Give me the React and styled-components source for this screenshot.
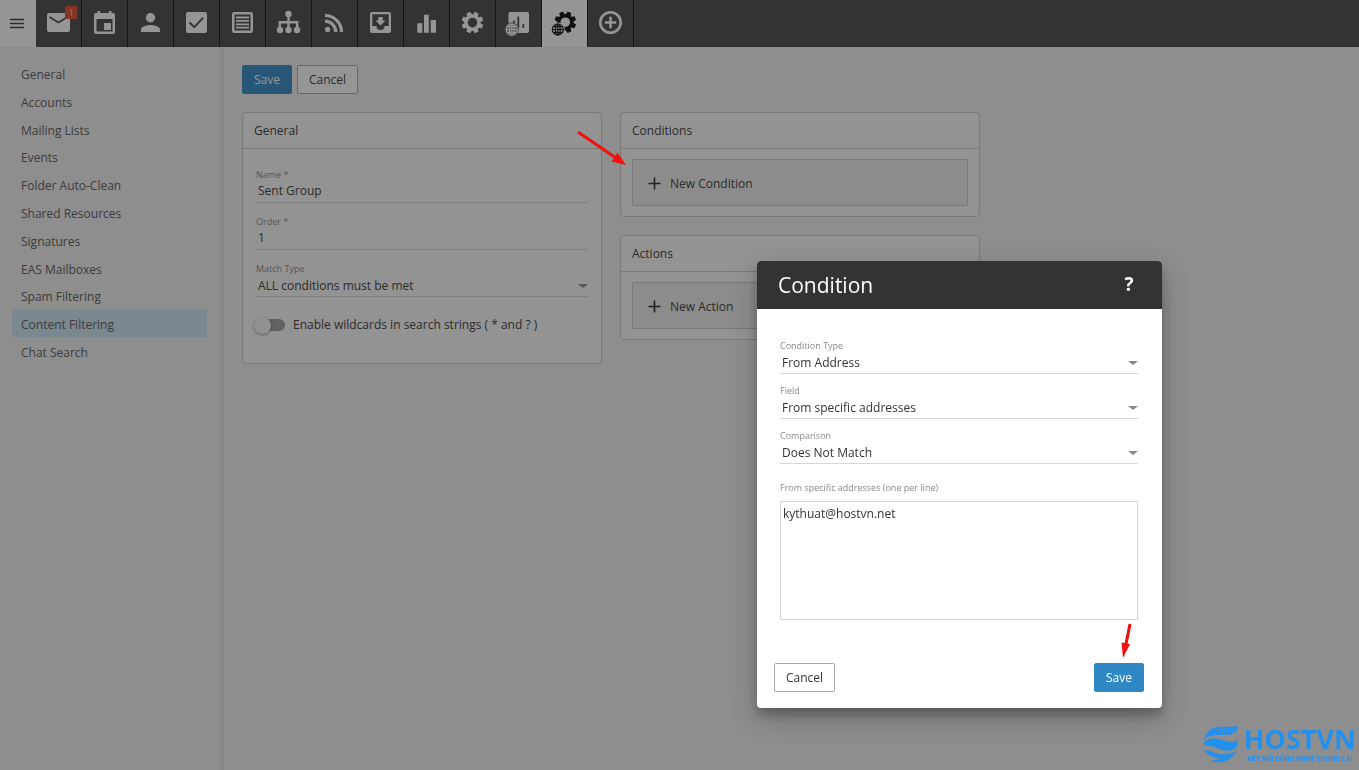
import React, { useState } from "react";
import styled, { createGlobalStyle, css } from "styled-components";

const colors = {
  bar: "#444444",
  barLine: "#0a0a0a",
  primary: "#2f87c3",
  text: "#333333",
  muted: "#888888",
  line: "#c9c9c9",
  softLine: "#d6d6d6",
  page: "#f1f1f1",
};

//CSS part
const GlobalStyle = createGlobalStyle`
  * {
    box-sizing: border-box;
  }
  body {
    margin: 0;
    background-color: ${colors.page};
    color: ${colors.text};
    font-family: "Open Sans", "Noto Sans", sans-serif;
    font-size: 12px;
    line-height: 16px;
  }
  button, input, select, textarea {
    font: inherit;
    color: inherit;
  }
`;

const Page = styled.div`
  display: flex;
  flex-direction: column;
  min-height: 100vh;
`;

const TopBar = styled.nav`
  display: flex;
  height: 47px;
  background-color: ${colors.bar};
`;

const MenuButton = styled.button`
  display: grid;
  place-items: center;
  width: 36px;
  padding: 0 2px 0 0;
  border: none;
  background-color: #ffffff;
`;

const Tab = styled.button`
  display: grid;
  place-items: center;
  position: relative;
  width: 46px;
  padding: 0;
  border: none;
  border-right: 1px solid ${colors.barLine};
  background-color: ${({ $active }) => ($active ? "#ffffff" : "transparent")};
  color: ${({ $active }) => ($active ? "#000000" : "#ffffff")};
`;

const Badge = styled.span`
  position: absolute;
  top: 6px;
  right: 4px;
  width: 12px;
  height: 13px;
  background-color: #e0452c;
  color: #ffd890;
  font-size: 9px;
  line-height: 13px;
  text-align: center;
`;

const Columns = styled.div`
  display: flex;
  flex: 1;
`;

const Sidebar = styled.aside`
  flex: 0 0 224px;
  padding: 12px 12px 0;
  border-right: 1px solid #dcdcdc;
  box-shadow: inset -4px 0 0 #e9e9e9;
`;

const SideList = styled.ul`
  display: grid;
  grid-auto-rows: 1fr;
  height: 306px;
  margin: 0 4px 0 0;
  padding: 0;
  list-style: none;
`;

const SideLink = styled.a`
  display: flex;
  align-items: center;
  height: 100%;
  padding: 4px 9px 0;
  color: #555555;
  text-decoration: none;
  background-color: ${({ $active }) => ($active ? "#cde6f5" : "transparent")};
`;

const Main = styled.main`
  flex: 1;
  padding: 18px;
`;

const ButtonRow = styled.div`
  display: flex;
  gap: 5px;
  justify-content: ${({ $spread }) => ($spread ? "space-between" : "flex-start")};
`;

const Button = styled.button`
  height: 29px;
  padding: 0 11px;
  border: 1px solid #aaaaaa;
  border-radius: 2px;
  background-color: #ffffff;
  ${({ $primary }) =>
    $primary &&
    css`
      border-color: ${colors.primary};
      background-color: ${colors.primary};
      color: #ffffff;
    `}
`;

const Cards = styled.div`
  display: flex;
  align-items: flex-start;
  gap: 18px;
  margin-top: 18px;
`;

const CardStack = styled.div`
  display: flex;
  flex: 0 1 360px;
  flex-direction: column;
  gap: 18px;
`;

const Card = styled.section`
  border: 1px solid ${colors.line};
  border-radius: 4px;
  background-color: #fbfbfb;
`;

const CardTitle = styled.h2`
  margin: 0;
  padding: 10px 11px 9px;
  border-bottom: 1px solid ${colors.line};
  font-size: 12px;
  font-weight: 400;
`;

const CardForm = styled.div`
  display: flex;
  flex-direction: column;
  gap: 13px;
  padding: 20px 13px 30px;
`;

const CardActions = styled.div`
  padding: 10px 11px;
`;

const AddButton = styled.button`
  display: flex;
  align-items: center;
  gap: 9px;
  width: 100%;
  height: 47px;
  padding: 2px 15px 0;
  border: 1px solid ${colors.line};
  background-color: #eeeeee;
`;

const Field = styled.div`
  display: flex;
  flex-direction: column;
  position: relative;
`;

const FieldLabel = styled.label`
  color: ${colors.muted};
  font-size: 9px;
  line-height: 12px;
`;

const control = css`
  width: 100%;
  height: 22px;
  padding: 0 2px 2px;
  border: none;
  border-bottom: 1px solid ${colors.softLine};
  border-radius: 0;
  outline: none;
  background-color: transparent;
`;

const TextInput = styled.input`
  ${control}
`;

const Select = styled.select`
  ${control}
  padding-bottom: 0;
  appearance: none;
`;

const SelectField = styled(Field)`
  &::after {
    content: "";
    position: absolute;
    right: 0;
    bottom: 9px;
    border: solid transparent;
    border-width: 4px 5px 0;
    border-top-color: ${colors.muted};
    pointer-events: none;
  }
`;

const SwitchRow = styled.label`
  display: flex;
  align-items: center;
  gap: 8px;
  margin-top: 7px;
`;

const Switch = styled.input`
  appearance: none;
  position: relative;
  width: 31px;
  height: 12px;
  margin: 0 0 0 -2px;
  border-radius: 6px;
  background: linear-gradient(#9e9e9e, #9e9e9e) right / 26px 100% no-repeat;
  &::before {
    content: "";
    position: absolute;
    top: -2px;
    left: 0;
    width: 17px;
    height: 17px;
    border-radius: 50%;
    background-color: #fafafa;
    box-shadow: 0 1px 3px rgba(0, 0, 0, 0.4);
  }
`;

const Backdrop = styled.div`
  position: fixed;
  inset: 0;
  background-color: rgba(33, 33, 33, 0.48);
`;

const Dialog = styled.section`
  position: fixed;
  top: 261px;
  left: 757px;
  width: 405px;
  overflow: hidden;
  border-radius: 4px;
  background-color: #ffffff;
  box-shadow: 0 7px 9px rgba(0, 0, 0, 0.2), 0 10px 28px rgba(0, 0, 0, 0.24);
`;

const DialogHeader = styled.header`
  display: flex;
  align-items: center;
  justify-content: space-between;
  height: 48px;
  padding: 0 24px 0 21px;
  background-color: #333333;
  color: #ffffff;
`;

const DialogTitle = styled.h1`
  margin: 0;
  font-size: 21px;
  line-height: 28px;
  font-weight: 400;
`;

const HelpButton = styled.button`
  width: 18px;
  padding: 0 0 3px;
  border: none;
  background: none;
  color: inherit;
  font-size: 19px;
  line-height: 24px;
  font-weight: 700;
`;

const DialogForm = styled.div`
  display: flex;
  flex-direction: column;
  gap: 11px;
  padding: 31px 24px 43px 23px;
`;

const AreaField = styled(Field)`
  gap: 7px;
  margin-top: 7px;
`;

const TextArea = styled.textarea`
  display: block;
  height: 119px;
  padding: 4px 2px;
  border: 1px solid ${colors.softLine};
  outline: none;
  resize: none;
`;

const DialogFooter = styled.footer`
  padding: 0 18px 16px 17px;
`;

const Pointer = styled.svg`
  position: fixed;
  top: ${({ $top }) => $top}px;
  left: ${({ $left }) => $left}px;
  pointer-events: none;
`;

const Brand = styled.div`
  display: flex;
  align-items: center;
  gap: 6px;
  position: fixed;
  right: 3px;
  bottom: 7px;
  color: #2490ee;
`;

const BrandText = styled.div`
  display: flex;
  flex-direction: column;
  gap: 3px;
`;

const BrandName = styled.div`
  font-size: 27px;
  line-height: 26px;
  font-weight: 700;
`;

const BrandLine = styled.div`
  font-family: Roboto, sans-serif;
  font-size: 7px;
  line-height: 8px;
  font-weight: 700;
  text-align: center;
`;

//Icons, all drawn on a 29px grid
const Icon = ({ children }) => (
  <svg width="29" height="29" viewBox="0 0 29 29" fill="currentColor" aria-hidden="true">
    {children}
  </svg>
);

const Gear = ({ cx = 14.5, cy }) => (
  <g transform={`translate(${cx} ${cy})`}>
    <circle r="6.5" fill="none" stroke="currentColor" strokeWidth="3.4" />
    {[22.5, 67.5, 112.5, 157.5, 202.5, 247.5, 292.5, 337.5].map((angle) => (
      <path key={angle} transform={`rotate(${angle})`} d="M-2.7-7 -2-10.8H2L2.7-7Z" />
    ))}
  </g>
);

const Globe = ({ cx, back }) => (
  <g transform={`translate(${cx} 20.5)`} fill={back} stroke="currentColor" strokeWidth="1.2">
    <circle r="6.4" stroke={back} />
    <circle r="5.5" />
    <ellipse rx="2.4" ry="5.5" />
    <path d="M0-5.5V5.5M-5.5 0H5.5M-4.7-2.8H4.7M-4.7 2.8H4.7" />
  </g>
);

const tabs = [
  {
    name: "Email",
    badge: 1,
    icon: (
      <>
        <rect x="3" y="4" width="23" height="19" rx="2" />
        <path d="M5.5 8 14.5 13.5 23.5 8" fill="none" stroke={colors.bar} strokeWidth="1.5" />
      </>
    ),
  },
  {
    name: "Calendar",
    icon: (
      <path
        fillRule="evenodd"
        d="M7.5 2H10V4H19V2H21.5V4H23A2 2 0 0 1 25 6V23A2 2 0 0 1 23 25H6A2 2 0 0 1 4 23V6A2 2 0 0 1 6 4H7.5ZM6.5 10V22.5H22.5V10ZM14 14H21V21H14Z"
      />
    ),
  },
  {
    name: "Contacts",
    icon: (
      <>
        <circle cx="14.5" cy="8.7" r="4.7" />
        <path d="M5 23V20.5C5 17.5 11 16 14.5 16S24 17.5 24 20.5V23Z" />
      </>
    ),
  },
  {
    name: "Tasks",
    icon: (
      <>
        <rect x="4" y="3" width="21" height="21" rx="2" />
        <path d="M7.5 13.5 12.3 18.2 21.2 8.7" fill="none" stroke={colors.bar} strokeWidth="1.9" />
      </>
    ),
  },
  {
    name: "Notes",
    icon: (
      <>
        <rect x="5.25" y="4.25" width="18.5" height="18.5" rx="1" fill="none" stroke="currentColor" strokeWidth="2.5" />
        <path d="M8 8.5H21M8 11.9H21M8 15.3H21M8 18.7H21" stroke="currentColor" strokeWidth="1.8" />
      </>
    ),
  },
  {
    name: "Groups",
    icon: (
      <>
        <circle cx="14.5" cy="5" r="3.2" />
        <path d="M14.5 5V20M5.8 20V13.3H23.2V20" fill="none" stroke="currentColor" strokeWidth="2.4" />
        <circle cx="6" cy="21" r="3.2" />
        <circle cx="14.5" cy="21" r="3.2" />
        <circle cx="23" cy="21" r="3.2" />
      </>
    ),
  },
  {
    name: "News",
    icon: (
      <>
        <circle cx="7.6" cy="20.4" r="2.6" />
        <path d="M5 12.2A10.8 10.8 0 0 1 15.8 23M5 6.5A16.5 16.5 0 0 1 21.5 23" fill="none" stroke="currentColor" strokeWidth="3.2" />
      </>
    ),
  },
  {
    name: "Archive",
    icon: (
      <path
        fillRule="evenodd"
        d="M6 3H23A2 2 0 0 1 25 5V22A2 2 0 0 1 23 24H6A2 2 0 0 1 4 22V5A2 2 0 0 1 6 3ZM6.3 5.3V17H10.5A4 4 0 0 0 18.5 17H22.7V5.3ZM12.3 8H16.7V11.5H19.5L14.5 16.5 9.5 11.5H12.3Z"
      />
    ),
  },
  { name: "Reports", icon: <path d="M5.3 14.3H10.3V23.7H5.3ZM12 5.8H16.8V23.7H12ZM18.7 11H24V23.7H18.7Z" /> },
  { name: "Settings", icon: <Gear cy={13.6} /> },
  {
    name: "Domain reports",
    icon: (
      <>
        <rect x="4.5" y="3" width="20.5" height="21" rx="2" />
        <path d="M10 11.5V18M14.3 7.5V19M19.3 15V19" stroke={colors.bar} strokeWidth="1.8" />
        <Globe cx={7.8} back="#777777" />
      </>
    ),
  },
  {
    name: "Domain settings",
    active: true,
    icon: (
      <>
        <Gear cx={15.3} cy={13.2} />
        <Globe cx={7.8} back="#ffffff" />
      </>
    ),
  },
  {
    name: "Add",
    icon: (
      <g fill="none" stroke="currentColor" strokeWidth="2.6">
        <circle cx="14.5" cy="13.5" r="10.2" />
        <path d="M14.5 7.8V19.2M8.8 13.5H20.2" />
      </g>
    ),
  },
];

const sideItems = [
  "General",
  "Accounts",
  "Mailing Lists",
  "Events",
  "Folder Auto-Clean",
  "Shared Resources",
  "Signatures",
  "EAS Mailboxes",
  "Spam Filtering",
  "Content Filtering",
  "Chat Search",
];

const PlusIcon = () => (
  <svg width="13" height="13" viewBox="0 0 13 13" aria-hidden="true">
    <path d="M6.5 0.5V12.5M0.5 6.5H12.5" stroke="#222222" strokeWidth="1.6" />
  </svg>
);

const BrandMark = () => (
  <svg width="35" height="37" viewBox="0 0 35 37" fill="currentColor" aria-hidden="true">
    <path d="M1 14C2 8 7 2 14 1C21 0 28 1.5 35 0C34.5 4 33.5 6 30 7.5C24 10 18 8.5 12 9C7 9.5 4 11 1 14Z" />
    <path d="M15 4H17M19 3H21M22 6H24M25 3.5H27M28 5.5H30M18 6.5H20M30 3H32" stroke="#8c8c8c" strokeWidth="1" />
    <path d="M0 18C4 12.5 10 11.5 16 13C23 15 29 17.5 35 14C35.5 19 33 23.5 27 24.5C20 25.5 15 22 9 20.5C5 19.5 2.5 19 0 18Z" />
    <path d="M1 24C7 24 11 27 17 28C24 29 30 27.5 34 24.5C31 31 24 36 15 36.5C12 36.5 9.5 35.5 8 34.5C12 34.5 15 33.5 17 32C10 31.5 4 29 1 24Z" />
  </svg>
);

//Function part
function Dropdown({ id, label, options }) {
  return (
    <SelectField>
      <FieldLabel htmlFor={id}>{label}</FieldLabel>
      <Select id={id}>
        {options.map((option) => (
          <option key={option}>{option}</option>
        ))}
      </Select>
    </SelectField>
  );
}

function ConditionDialog() {
  const [addresses, setAddresses] = useState("kythuat@hostvn.net");
  return (
    <Dialog role="dialog" aria-labelledby="condition-title">
      <DialogHeader>
        <DialogTitle id="condition-title">Condition</DialogTitle>
        <HelpButton type="button">?</HelpButton>
      </DialogHeader>
      <DialogForm>
        <Dropdown id="condition-type" label="Condition Type" options={["From Address"]} />
        <Dropdown id="field" label="Field" options={["From specific addresses"]} />
        <Dropdown id="comparison" label="Comparison" options={["Does Not Match"]} />
        <AreaField>
          <FieldLabel htmlFor="addresses">From specific addresses (one per line)</FieldLabel>
          <TextArea id="addresses" spellCheck={false} value={addresses} onChange={({ target: { value } }) => setAddresses(value)} />
        </AreaField>
      </DialogForm>
      <DialogFooter>
        <ButtonRow $spread>
          <Button type="button">Cancel</Button>
          <Button type="button" $primary>Save</Button>
        </ButtonRow>
      </DialogFooter>
    </Dialog>
  );
}

export default function App() {
  const [name, setName] = useState("Sent Group");
  const [order, setOrder] = useState("1");
  return (
    <>
      <GlobalStyle />
      <Page>
        <TopBar>
          <MenuButton type="button" aria-label="Menu">
            <svg width="14" height="11" viewBox="0 0 14 11">
              <path d="M0 1.5H14M0 5.5H14M0 9.5H14" stroke="#333333" strokeWidth="1.4" />
            </svg>
          </MenuButton>
          {tabs.map((tab) => (
            <Tab key={tab.name} type="button" aria-label={tab.name} $active={tab.active}>
              <Icon>{tab.icon}</Icon>
              {tab.badge && <Badge>{tab.badge}</Badge>}
            </Tab>
          ))}
        </TopBar>
        <Columns>
          <Sidebar>
            <SideList>
              {sideItems.map((item) => (
                <li key={item}>
                  <SideLink href="#" $active={item === "Content Filtering"}>{item}</SideLink>
                </li>
              ))}
            </SideList>
          </Sidebar>
          <Main>
            <ButtonRow>
              <Button type="button" $primary>Save</Button>
              <Button type="button">Cancel</Button>
            </ButtonRow>
            <Cards>
              <CardStack>
                <Card>
                  <CardTitle>General</CardTitle>
                  <CardForm>
                    <Field>
                      <FieldLabel htmlFor="name">Name *</FieldLabel>
                      <TextInput id="name" value={name} onChange={({ target: { value } }) => setName(value)} />
                    </Field>
                    <Field>
                      <FieldLabel htmlFor="order">Order *</FieldLabel>
                      <TextInput id="order" value={order} onChange={({ target: { value } }) => setOrder(value)} />
                    </Field>
                    <Dropdown id="match-type" label="Match Type" options={["ALL conditions must be met"]} />
                    <SwitchRow>
                      <Switch type="checkbox" />
                      Enable wildcards in search strings ( * and ? )
                    </SwitchRow>
                  </CardForm>
                </Card>
              </CardStack>
              <CardStack>
                <Card>
                  <CardTitle>Conditions</CardTitle>
                  <CardActions>
                    <AddButton type="button">
                      <PlusIcon />
                      New Condition
                    </AddButton>
                  </CardActions>
                </Card>
                <Card>
                  <CardTitle>Actions</CardTitle>
                  <CardActions>
                    <AddButton type="button">
                      <PlusIcon />
                      New Action
                    </AddButton>
                  </CardActions>
                </Card>
              </CardStack>
            </Cards>
          </Main>
        </Columns>
      </Page>
      <Backdrop />
      <ConditionDialog />
      <Pointer $top={130} $left={576} width="52" height="38" viewBox="0 0 52 38">
        <path d="M2 2 40 28" stroke="#f01010" strokeWidth="3" />
        <path d="M50 35 35.5 31.5 41.5 22.5Z" fill="#f01010" />
      </Pointer>
      <Pointer $top={622} $left={1118} width="16" height="38" viewBox="0 0 16 38">
        <path d="M12 2 8 22" stroke="#f01010" strokeWidth="3" />
        <path d="M5 36 3.5 20.5 12 22Z" fill="#f01010" />
      </Pointer>
      <Brand>
        <BrandMark />
        <BrandText>
          <BrandName>HOSTVN</BrandName>
          <BrandLine>KẾT NỐI CÔNG NGHỆ TƯƠNG LAI</BrandLine>
        </BrandText>
      </Brand>
    </>
  );
}
